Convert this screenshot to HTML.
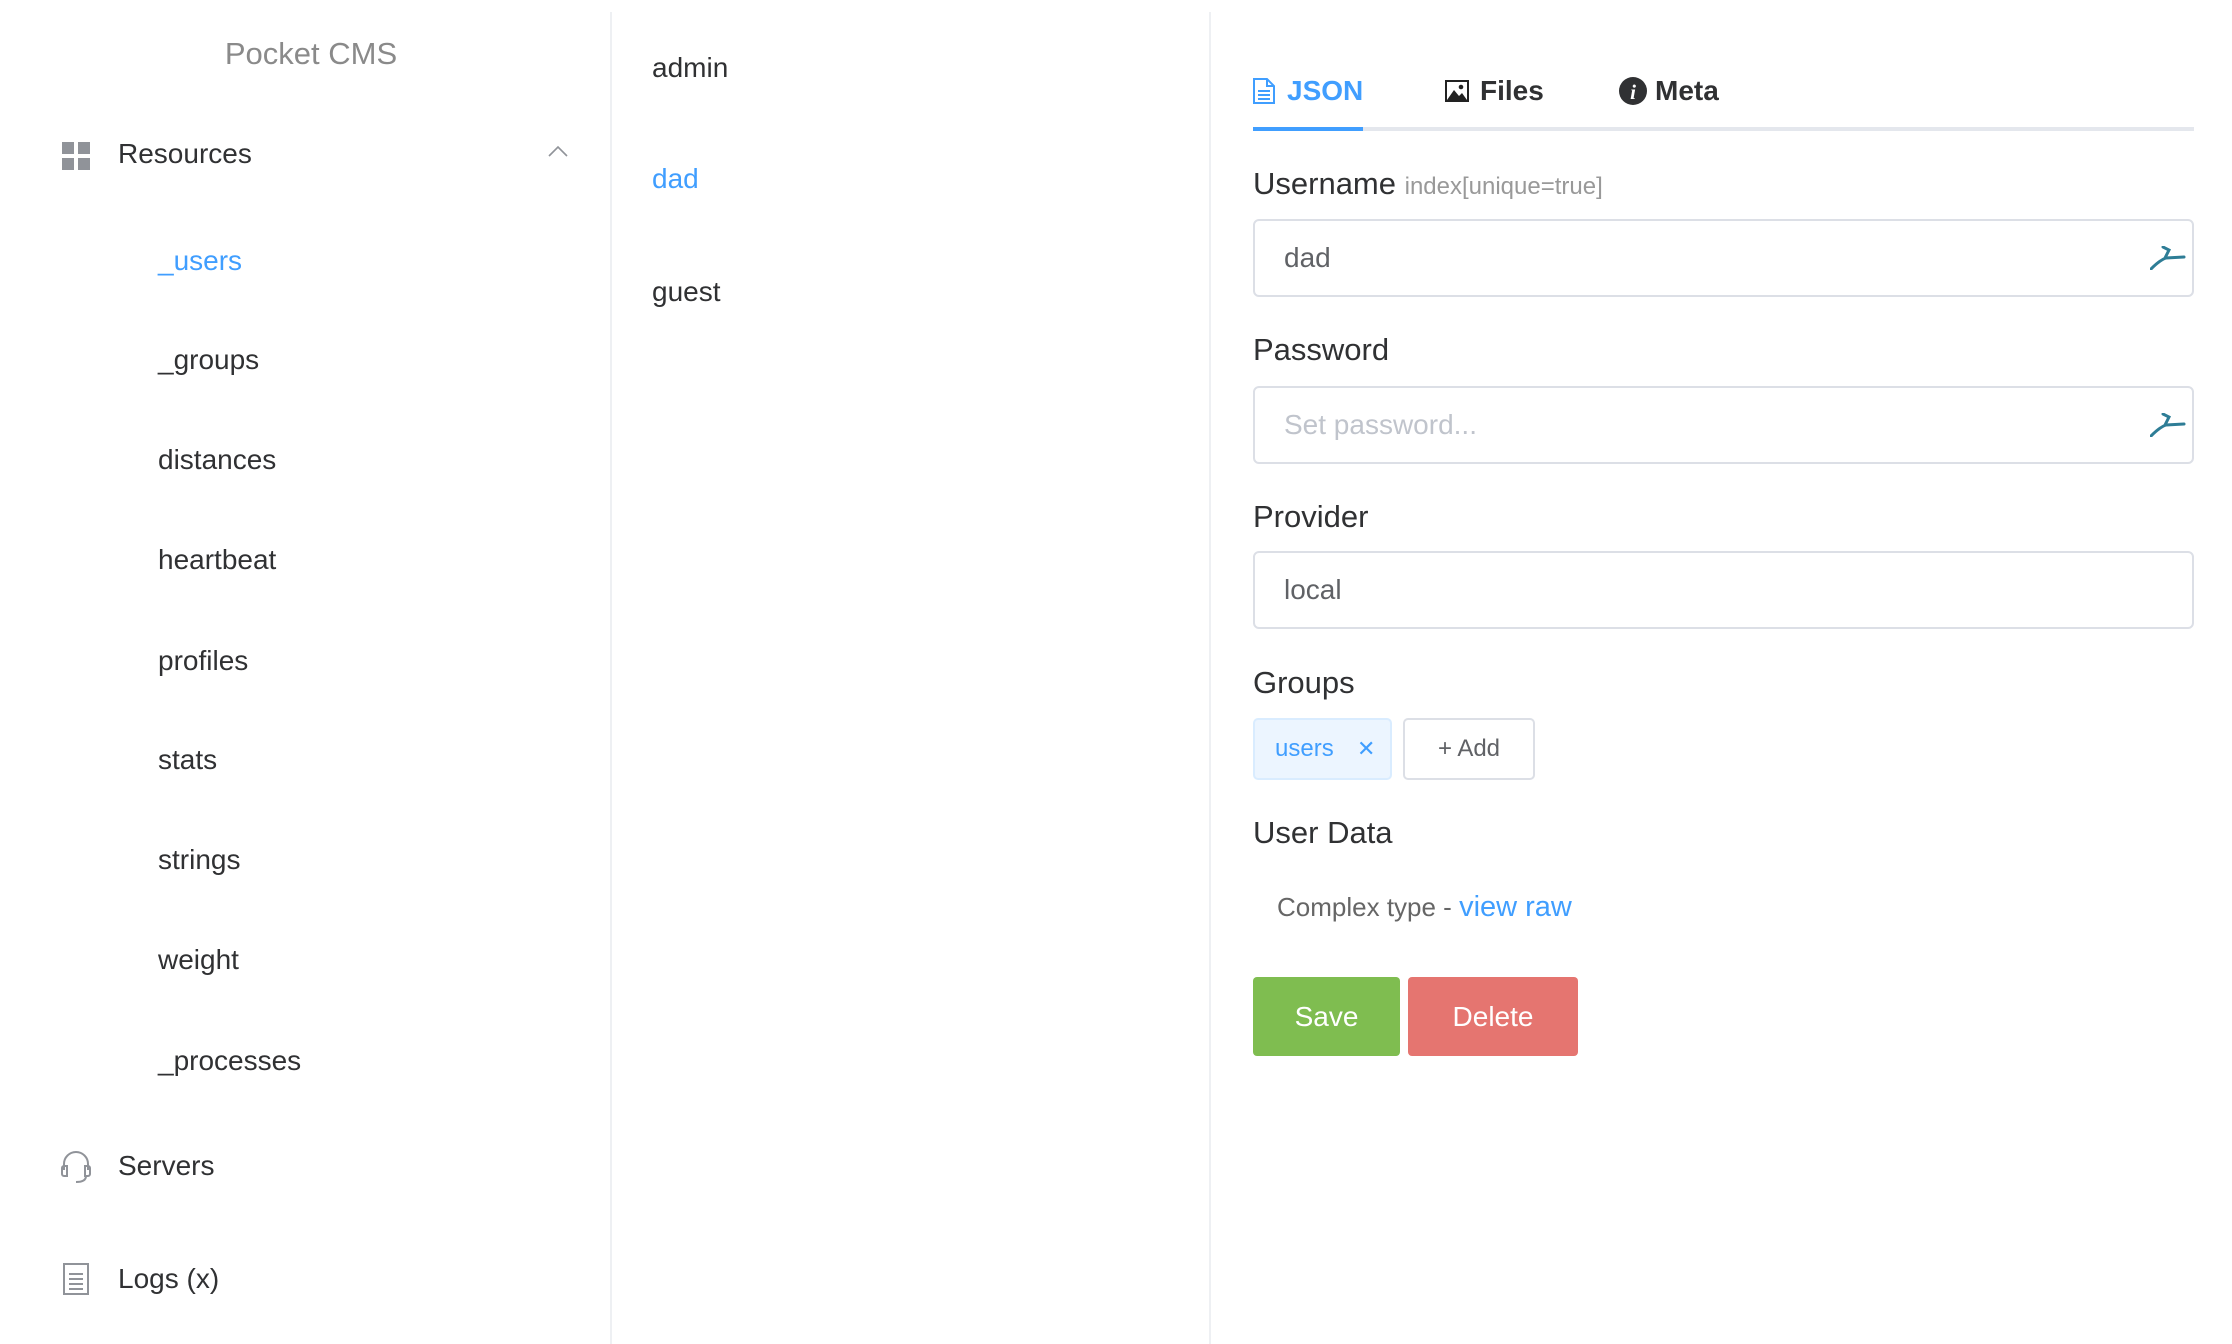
<!DOCTYPE html>
<html><head><meta charset="utf-8">
<style>
*{margin:0;padding:0;box-sizing:border-box}
body{width:2232px;height:1344px;background:#fff;font-family:"Liberation Sans",Arial,sans-serif;position:relative;overflow:hidden;color:#303133}
.a{position:absolute;white-space:nowrap}
.vl{position:absolute;top:12px;bottom:0;width:2px;background:#eef0f3}
.side{font-size:28px;color:#303133;line-height:40px}
.lbl{font-size:31px;color:#303133;line-height:40px}
.inp{position:absolute;left:1253px;width:941px;height:78px;border:2px solid #dcdfe6;border-radius:6px;font-size:28px;color:#606266;padding-left:29px;line-height:74px}
</style></head><body>
<div class="vl" style="left:610px"></div>
<div class="vl" style="left:1209px"></div>

<div class="a" style="left:0;width:622px;text-align:center;top:34px;font-size:31px;color:#8a8a8a;line-height:40px">Pocket CMS</div>

<svg class="a" style="left:62px;top:142px" width="28" height="28" viewBox="0 0 28 28"><g fill="#909399"><rect x="0" y="0" width="12" height="12"/><rect x="16" y="0" width="12" height="12"/><rect x="0" y="16" width="12" height="12"/><rect x="16" y="16" width="12" height="12"/></g></svg>
<div class="a side" style="left:118px;top:134px">Resources</div>
<svg class="a" style="left:548px;top:145px" width="20" height="12" viewBox="0 0 20 12"><path d="M1 11 L10 2 L19 11" fill="none" stroke="#909399" stroke-width="1.6"/></svg>

<div class="a side" style="left:158px;top:241px;color:#409eff">_users</div>
<div class="a side" style="left:158px;top:340px">_groups</div>
<div class="a side" style="left:158px;top:440px">distances</div>
<div class="a side" style="left:158px;top:540px">heartbeat</div>
<div class="a side" style="left:158px;top:641px">profiles</div>
<div class="a side" style="left:158px;top:740px">stats</div>
<div class="a side" style="left:158px;top:840px">strings</div>
<div class="a side" style="left:158px;top:940px">weight</div>
<div class="a side" style="left:158px;top:1041px">_processes</div>

<svg class="a" style="left:60px;top:1150px" width="32" height="34" viewBox="0 0 32 34"><g fill="none" stroke="#909399" stroke-width="2"><path d="M4 20 V14 A12 12 0 0 1 28 14 V20"/><path d="M4 16 h3 v10 h-3 a2 2 0 0 1 -2 -2 v-6 a2 2 0 0 1 2 -2z"/><path d="M28 16 h-3 v10 h3 a2 2 0 0 0 2 -2 v-6 a2 2 0 0 0 -2 -2z"/><path d="M26 26 q0 6 -10 6"/></g></svg>
<div class="a side" style="left:118px;top:1146px">Servers</div>
<svg class="a" style="left:63px;top:1263px" width="26" height="32" viewBox="0 0 26 32"><g fill="none" stroke="#909399" stroke-width="2"><rect x="1" y="1" width="24" height="30"/><path d="M6 11h14M6 16h14M6 21h14M6 26h14"/></g></svg>
<div class="a side" style="left:118px;top:1259px">Logs (x)</div>

<div class="a side" style="left:652px;top:48px">admin</div>
<div class="a side" style="left:652px;top:159px;color:#409eff">dad</div>
<div class="a side" style="left:652px;top:272px">guest</div>

<!-- tabs -->
<svg class="a" style="left:1253px;top:78px" width="22" height="26" viewBox="0 0 22 26"><g fill="none" stroke="#409eff" stroke-width="2"><path d="M1 1 H14 L21 8 V25 H1 Z"/><path d="M14 1 V8 H21"/><path d="M5 13h12M5 17h12M5 21h12"/></g></svg>
<div class="a" style="left:1287px;top:73px;font-size:28px;font-weight:bold;color:#409eff;line-height:36px">JSON</div>
<svg class="a" style="left:1445px;top:80px" width="24" height="22" viewBox="0 0 24 22"><rect x="1" y="1" width="22" height="20" fill="none" stroke="#222" stroke-width="2"/><path d="M2 20 L9 10 L14 16 L17 13 L22 20Z" fill="#222"/><circle cx="16" cy="7" r="2.3" fill="#222"/></svg>
<div class="a" style="left:1480px;top:73px;font-size:28px;font-weight:bold;color:#303133;line-height:36px">Files</div>
<svg class="a" style="left:1619px;top:77px" width="28" height="28" viewBox="0 0 28 28"><circle cx="14" cy="14" r="14" fill="#303133"/><text x="14" y="22" text-anchor="middle" font-family="Liberation Serif,serif" font-style="italic" font-weight="bold" font-size="21" fill="#fff">i</text></svg>
<div class="a" style="left:1655px;top:73px;font-size:28px;font-weight:bold;color:#303133;line-height:36px">Meta</div>
<div class="a" style="left:1253px;top:127px;width:941px;height:4px;background:#e4e7ed"></div>
<div class="a" style="left:1253px;top:127px;width:110px;height:4px;background:#409eff"></div>

<div class="a lbl" style="left:1253px;top:164px">Username <span style="font-size:24px;color:#999">index[unique=true]</span></div>
<div class="inp" style="top:219px">dad</div>
<svg class="a" style="left:2150px;top:246px" width="36" height="24" viewBox="0 0 36 24"><g fill="none" stroke="#2e7d96" stroke-width="3" stroke-linecap="round"><path d="M1 23 Q10 14 16 12 L34 11"/><path d="M13 1 L19 4 L15 12"/></g></svg>

<div class="a lbl" style="left:1253px;top:330px">Password</div>
<div class="inp" style="top:386px;color:#c0c4cc">Set password...</div>
<svg class="a" style="left:2150px;top:413px" width="36" height="24" viewBox="0 0 36 24"><g fill="none" stroke="#2e7d96" stroke-width="3" stroke-linecap="round"><path d="M1 23 Q10 14 16 12 L34 11"/><path d="M13 1 L19 4 L15 12"/></g></svg>

<div class="a lbl" style="left:1253px;top:497px">Provider</div>
<div class="inp" style="top:551px">local</div>

<div class="a lbl" style="left:1253px;top:663px">Groups</div>
<div class="a" style="left:1253px;top:718px;width:139px;height:62px;background:#ecf5ff;border:2px solid #d9ecff;border-radius:5px;color:#409eff;font-size:24px;line-height:58px;padding-left:20px">users<span style="position:absolute;left:102px;top:0;font-size:22px">✕</span></div>
<div class="a" style="left:1403px;top:718px;width:132px;height:62px;border:2px solid #dcdfe6;border-radius:5px;color:#606266;font-size:24px;line-height:58px;text-align:center">+ Add</div>

<div class="a lbl" style="left:1253px;top:813px">User Data</div>
<div class="a" style="left:1277px;top:889px;font-size:26px;color:#666;line-height:36px">Complex type - <span style="color:#409eff;font-size:29px">view raw</span></div>

<div class="a" style="left:1253px;top:977px;width:147px;height:79px;background:#7fbd50;border-radius:4px;color:#fff;font-size:28px;line-height:79px;text-align:center">Save</div>
<div class="a" style="left:1408px;top:977px;width:170px;height:79px;background:#e57570;border-radius:4px;color:#fff;font-size:28px;line-height:79px;text-align:center">Delete</div>
</body></html>
